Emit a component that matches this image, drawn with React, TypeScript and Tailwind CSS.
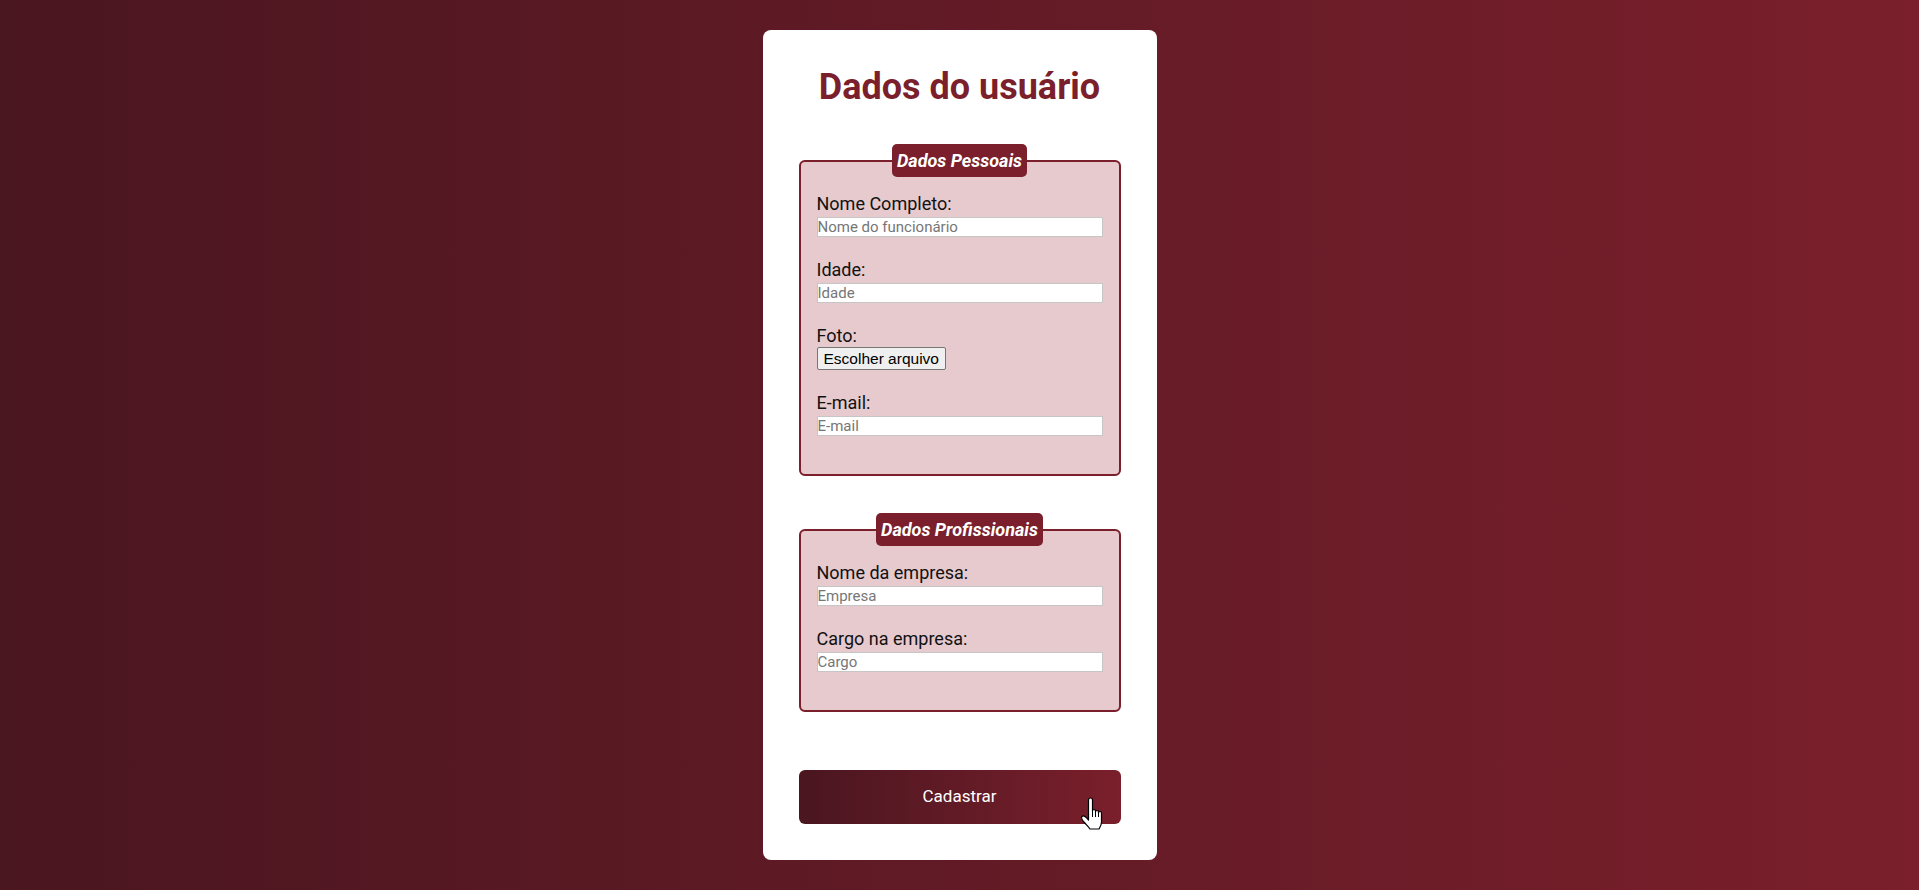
import { FC } from "react";

const font = "font-['Roboto',_'Liberation_Sans',_sans-serif]";

interface FieldProps {
  label: string;
  placeholder: string;
}

const Field: FC<FieldProps> = ({ label, placeholder }) => (
  <div className="mb-[22px] flex flex-col">
    <label className="text-[18px] leading-[21px] text-[#111]">{label}</label>
    <input
      type="text"
      placeholder={placeholder}
      className="mt-[3px] h-[20px] w-full border border-[#c6c6c6] bg-white p-0 text-[15px] text-black outline-none placeholder:text-[#767676]"
    />
  </div>
);

const Section: FC<{ title: string; children: React.ReactNode }> = ({ title, children }) => (
  <fieldset className="rounded-md border-2 border-[#7a1f2b] bg-[#e6cacd] px-4 pb-4">
    <legend className="mx-auto rounded-[5px] bg-[#7a1f2b] px-[5px] py-[6px] text-[18px] font-bold italic leading-[21px] text-white">
      {title}
    </legend>
    <div className="pt-4">{children}</div>
  </fieldset>
);

// mouse pointer sitting over the submit button in the screenshot
const HandCursor = () => (
  <svg
    width="30"
    height="34"
    viewBox="0 0 30 34"
    className="pointer-events-none absolute left-[280px] top-[27px]"
  >
    <path
      d="M9.5 3a2 2 0 0 1 4 0V14a1.5 1.5 0 0 1 3 0v1a1.5 1.5 0 0 1 3 0v1a1.5 1.5 0 0 1 3 0V25c0 3-1.5 5-2.5 7H11c-1.5-2-3.5-4-6-7-2-2.5-3.5-4-2-5.5 1.3-1.2 3-.2 4.5 1.2L9.5 23Z"
      fill="#fff"
      stroke="#000"
      strokeWidth="1.2"
      strokeLinejoin="round"
    />
    <path d="M13.5 14v6M16.5 15v5M19.5 16v4" stroke="#000" strokeWidth="1" />
  </svg>
);

export default function App() {
  return (
    <div
      className={`flex min-h-screen items-center justify-center bg-gradient-to-r from-[#4a1620] to-[#7a1f2b] ${font}`}
    >
      <div className="w-[394px] rounded-lg bg-white p-9">
        <h1 className="text-center text-[36px] font-bold leading-[42px] text-[#7a1f2b]">
          Dados do usuário
        </h1>

        <div className="mt-9">
          <Section title="Dados Pessoais">
            <Field label="Nome Completo:" placeholder="Nome do funcionário" />
            <Field label="Idade:" placeholder="Idade" />
            <div className="mb-[22px] flex flex-col items-start">
              <label className="text-[18px] leading-[21px] text-[#111]">Foto:</label>
              <button
                type="button"
                className="mt-px rounded-[2px] border border-[#767676] bg-[#efefef] px-[6px] py-[2px] font-['Liberation_Sans',_Arial,_sans-serif] text-[15.5px] leading-[17px] text-black"
              >
                Escolher arquivo
              </button>
            </div>
            <Field label="E-mail:" placeholder="E-mail" />
          </Section>
        </div>

        <div className="mt-[37px]">
          <Section title="Dados Profissionais">
            <Field label="Nome da empresa:" placeholder="Empresa" />
            <Field label="Cargo na empresa:" placeholder="Cargo" />
          </Section>
        </div>

        <button
          type="button"
          className="relative mt-[58px] flex h-[54px] w-full items-center justify-center rounded-md bg-gradient-to-r from-[#4a1620] to-[#7a1f2b] text-[17px] font-normal text-white"
        >
          Cadastrar
          <HandCursor />
        </button>
      </div>
    </div>
  );
}
